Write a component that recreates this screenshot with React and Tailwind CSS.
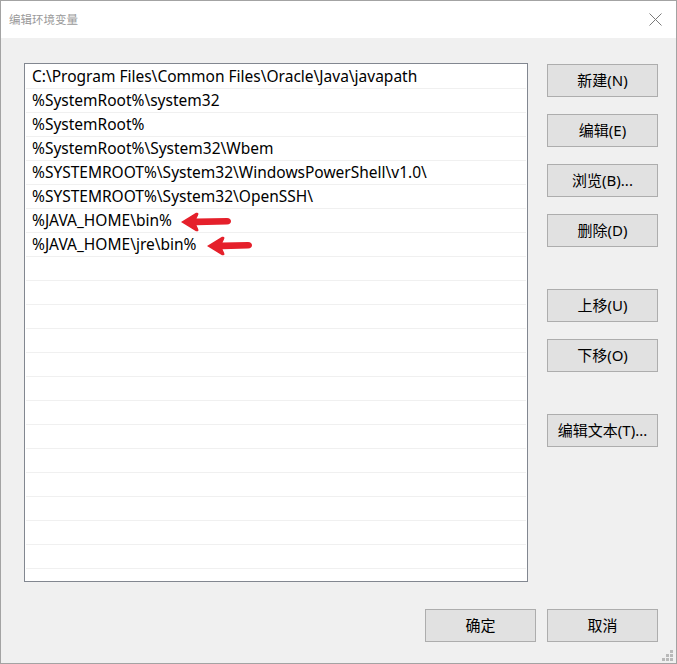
import React from "react";

const rows = [
  "C:\\Program Files\\Common Files\\Oracle\\Java\\javapath",
  "%SystemRoot%\\system32",
  "%SystemRoot%",
  "%SystemRoot%\\System32\\Wbem",
  "%SYSTEMROOT%\\System32\\WindowsPowerShell\\v1.0\\",
  "%SYSTEMROOT%\\System32\\OpenSSH\\",
  "%JAVA_HOME\\bin%",
  "%JAVA_HOME\\jre\\bin%",
];

function Arrow({ w = 50 }) {
  return (
    <svg width={w} height="20" viewBox={`0 0 ${w} 20`} className="shrink-0">
      <path
        d={`M0 10 L15 0.8 Q18.5 0 17 3.5 L15.5 6.5 L${w - 4} 6 Q${w} 6.3 ${w} 9.3 Q${w} 12.3 ${w - 4} 12.6 L15.5 13.3 L17 16.5 Q18.5 20 15 19.2 Z`}
        fill="#e5202b"
      />
    </svg>
  );
}

function Btn({ children, className = "" }) {
  return (
    <div
      className={
        "w-[111px] h-[33px] bg-[#e1e1e1] border border-[#adadad] flex items-center justify-center text-[15px] text-black " +
        className
      }
    >
      {children}
    </div>
  );
}

export default function App() {
  const font = {
    fontFamily: '"Noto Sans","Noto Sans CJK SC",sans-serif',
  };
  const all = [...rows, ...Array(14).fill("")];
  return (
    <div
      className="relative w-[677px] h-[664px] border border-[#a3a3a3] bg-[#f0f0f0] flex flex-col overflow-hidden"
      style={font}
    >
      <div className="h-[37px] bg-white flex items-center justify-between pl-[8px] pr-[14px]">
        <span className="text-[11.5px] text-[#9a9a9a]">编辑环境变量</span>
        <svg width="13" height="13" viewBox="0 0 13 13">
          <path d="M0.5 0.5 L12.5 12.5 M12.5 0.5 L0.5 12.5" stroke="#7a7a7a" strokeWidth="1" />
        </svg>
      </div>
      <div className="flex pl-[23px] pt-[25px] pr-[18px]">
        <div className="w-[504px] h-[519px] bg-white border border-[#828790] p-[1px] overflow-hidden">
          {all.map((t, i) => (
            <div
              key={i}
              className="h-[24px] border-b border-[#f0f0f0] flex items-center pl-[6px] pt-[1px] text-[15.5px] text-black whitespace-nowrap"
            >
              <span>{t}</span>
              {i === 6 && (
                <span className="ml-[9px] mt-[1px] flex">
                  <Arrow w={50} />
                </span>
              )}
              {i === 7 && (
                <span className="ml-[10px] mt-[1px] flex">
                  <Arrow w={45} />
                </span>
              )}
            </div>
          ))}
        </div>
        <div className="ml-[19px] pt-[1px] flex flex-col">
          <Btn>新建(N)</Btn>
          <Btn className="mt-[17px]">编辑(E)</Btn>
          <Btn className="mt-[17px]">浏览(B)...</Btn>
          <Btn className="mt-[17px]">删除(D)</Btn>
          <Btn className="mt-[42px]">上移(U)</Btn>
          <Btn className="mt-[17px]">下移(O)</Btn>
          <Btn className="mt-[42px]">编辑文本(T)...</Btn>
        </div>
      </div>
      <div className="flex justify-end pr-[18px] pt-[27px] gap-[11px]">
        <Btn>确定</Btn>
        <Btn>取消</Btn>
      </div>
      <div className="absolute right-[3px] bottom-[2px] grid grid-cols-3 gap-[1px]">
        <span className="w-[3px] h-[3px]" />
        <span className="w-[3px] h-[3px]" />
        <span className="w-[3px] h-[3px] bg-[#b9b9b9]" />
        <span className="w-[3px] h-[3px]" />
        <span className="w-[3px] h-[3px] bg-[#b9b9b9]" />
        <span className="w-[3px] h-[3px] bg-[#b9b9b9]" />
        <span className="w-[3px] h-[3px] bg-[#b9b9b9]" />
        <span className="w-[3px] h-[3px] bg-[#b9b9b9]" />
        <span className="w-[3px] h-[3px] bg-[#b9b9b9]" />
      </div>
    </div>
  );
}
